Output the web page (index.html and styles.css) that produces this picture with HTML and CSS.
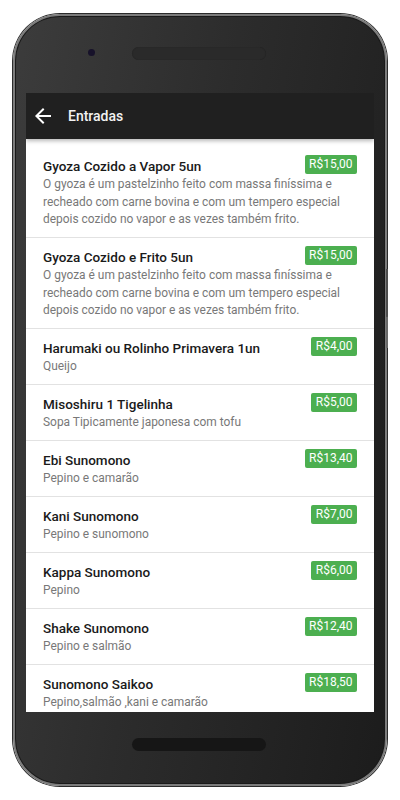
FILE: index.html
```html
<!DOCTYPE html>
<html lang="pt-BR">
<head>
<meta charset="utf-8">
<title>Entradas</title>
<link rel="stylesheet" href="styles.css">
</head>
<body>
<div class="page">
  <div class="phone">
    <span class="side-button"></span>
    <div class="phone-top">
      <span class="camera"></span>
      <span class="speaker"></span>
      <span></span>
    </div>
    <div class="screen">
      <header class="appbar">
        <svg class="back" viewBox="0 0 24 24" width="24" height="24" aria-hidden="true"><path d="M20 11H7.83l5.59-5.59L12 4l-8 8 8 8 1.41-1.41L7.83 13H20v-2z" fill="#fff"/></svg>
        <h1 class="appbar-title">Entradas</h1>
      </header>
      <ul class="menu">
        <li class="item">
          <h2 class="item-name">Gyoza Cozido a Vapor 5un</h2>
          <span class="price">R$15,00</span>
          <p class="item-desc">O gyoza é um pastelzinho feito com massa finíssima e recheado com carne bovina e com um tempero especial depois cozido no vapor e as vezes também frito.</p>
        </li>
        <li class="item">
          <h2 class="item-name">Gyoza Cozido e Frito 5un</h2>
          <span class="price">R$15,00</span>
          <p class="item-desc">O gyoza é um pastelzinho feito com massa finíssima e recheado com carne bovina e com um tempero especial depois cozido no vapor e as vezes também frito.</p>
        </li>
        <li class="item">
          <h2 class="item-name">Harumaki ou Rolinho Primavera 1un</h2>
          <span class="price">R$4,00</span>
          <p class="item-desc">Queijo</p>
        </li>
        <li class="item">
          <h2 class="item-name">Misoshiru 1 Tigelinha</h2>
          <span class="price">R$5,00</span>
          <p class="item-desc">Sopa Tipicamente japonesa com tofu</p>
        </li>
        <li class="item">
          <h2 class="item-name">Ebi Sunomono</h2>
          <span class="price">R$13,40</span>
          <p class="item-desc">Pepino e camarão</p>
        </li>
        <li class="item">
          <h2 class="item-name">Kani Sunomono</h2>
          <span class="price">R$7,00</span>
          <p class="item-desc">Pepino e sunomono</p>
        </li>
        <li class="item">
          <h2 class="item-name">Kappa Sunomono</h2>
          <span class="price">R$6,00</span>
          <p class="item-desc">Pepino</p>
        </li>
        <li class="item">
          <h2 class="item-name">Shake Sunomono</h2>
          <span class="price">R$12,40</span>
          <p class="item-desc">Pepino e salmão</p>
        </li>
        <li class="item">
          <h2 class="item-name">Sunomono Saikoo</h2>
          <span class="price">R$18,50</span>
          <p class="item-desc">Pepino,salmão ,kani e camarão</p>
        </li>
      </ul>
    </div>
    <div class="phone-bottom">
      <span class="home-bar"></span>
    </div>
  </div>
</div>
</body>
</html>
```

FILE: styles.css
```css
* { box-sizing: border-box; }

html, body {
  margin: 0;
  padding: 0;
  background: #ffffff;
  font-family: Roboto, "Noto Sans", "Liberation Sans", sans-serif;
}

.page {
  width: 400px;
  height: 800px;
  padding: 13.5px 13px 0;
}

.phone {
  position: relative;
  width: 374px;
  height: 772px;
  border: 2px solid #7c7c7c;
  border-radius: 47px;
  box-shadow: 0 0 0 1px #2b2b2b, inset 0 0 0 1px #1a1a1a;
  background: linear-gradient(100deg, #3c3c3c 0%, #2c2c2c 45%, #1c1c1c 100%);
  display: flex;
  flex-direction: column;
  padding: 0 11px;
}

.side-button {
  position: absolute;
  right: -3px;
  top: 253px;
  width: 2px;
  height: 79px;
  background: linear-gradient(180deg, #4e4e4e 0%, #4e4e4e 60%, #6a6a6a 61%, #6a6a6a 100%);
}

.phone-top {
  height: 77px;
  display: grid;
  grid-template-columns: 1fr auto 1fr;
  align-items: center;
  padding-bottom: 2px;
}

.camera {
  justify-self: end;
  width: 7px;
  height: 7px;
  border-radius: 50%;
  background: #17122a;
  margin-right: 40px;
  margin-top: -1px;
}

.speaker {
  width: 134px;
  height: 13px;
  border-radius: 7px;
  background: #2a2a2a;
  box-shadow: inset 0 0 1px rgba(0,0,0,0.4);
  margin-left: -3px;
}

.screen {
  flex: 1;
  display: flex;
  flex-direction: column;
  background: #ffffff;
  overflow: hidden;
}

.appbar {
  position: relative;
  z-index: 1;
  height: 46.5px;
  flex: none;
  background: #202020;
  display: flex;
  align-items: center;
  padding-left: 5px;
  box-shadow: 0 2px 4px rgba(0,0,0,0.28);
}

.back {
  display: block;
  margin-top: 1px;
}

.appbar-title {
  margin: 0 0 0 13px;
  font-size: 14px;
  font-weight: 500;
  color: #f2f2f2;
  line-height: 1;
}

.menu {
  list-style: none;
  margin: 0;
  padding: 8px 0 0;
}

.item {
  display: grid;
  grid-template-columns: 1fr auto;
  column-gap: 12px;
  align-items: start;
  padding: 9.5px 17px 8.4px;
  border-bottom: 1px solid #e2e2e2;
}

.item-name {
  margin: 0;
  font-size: 13.5px;
  line-height: 18px;
  font-weight: 500;
  color: #1a1a1a;
}

.item-desc {
  grid-column: 1 / -1;
  margin: 1.5px 0 0;
  font-size: 11.95px;
  line-height: 17.6px;
  color: #787878;
}

.price {
  margin-top: -1.5px;
  height: 19px;
  padding: 0 4.5px;
  border-radius: 2px;
  background: #4caf50;
  color: #ffffff;
  font-size: 12px;
  line-height: 19px;
}

.phone-bottom {
  height: 71.5px;
  display: flex;
  justify-content: center;
  align-items: center;
  padding-bottom: 6px;
}

.home-bar {
  width: 134px;
  height: 13px;
  border-radius: 7px;
  background: #161616;
  margin-left: -3px;
}
```
